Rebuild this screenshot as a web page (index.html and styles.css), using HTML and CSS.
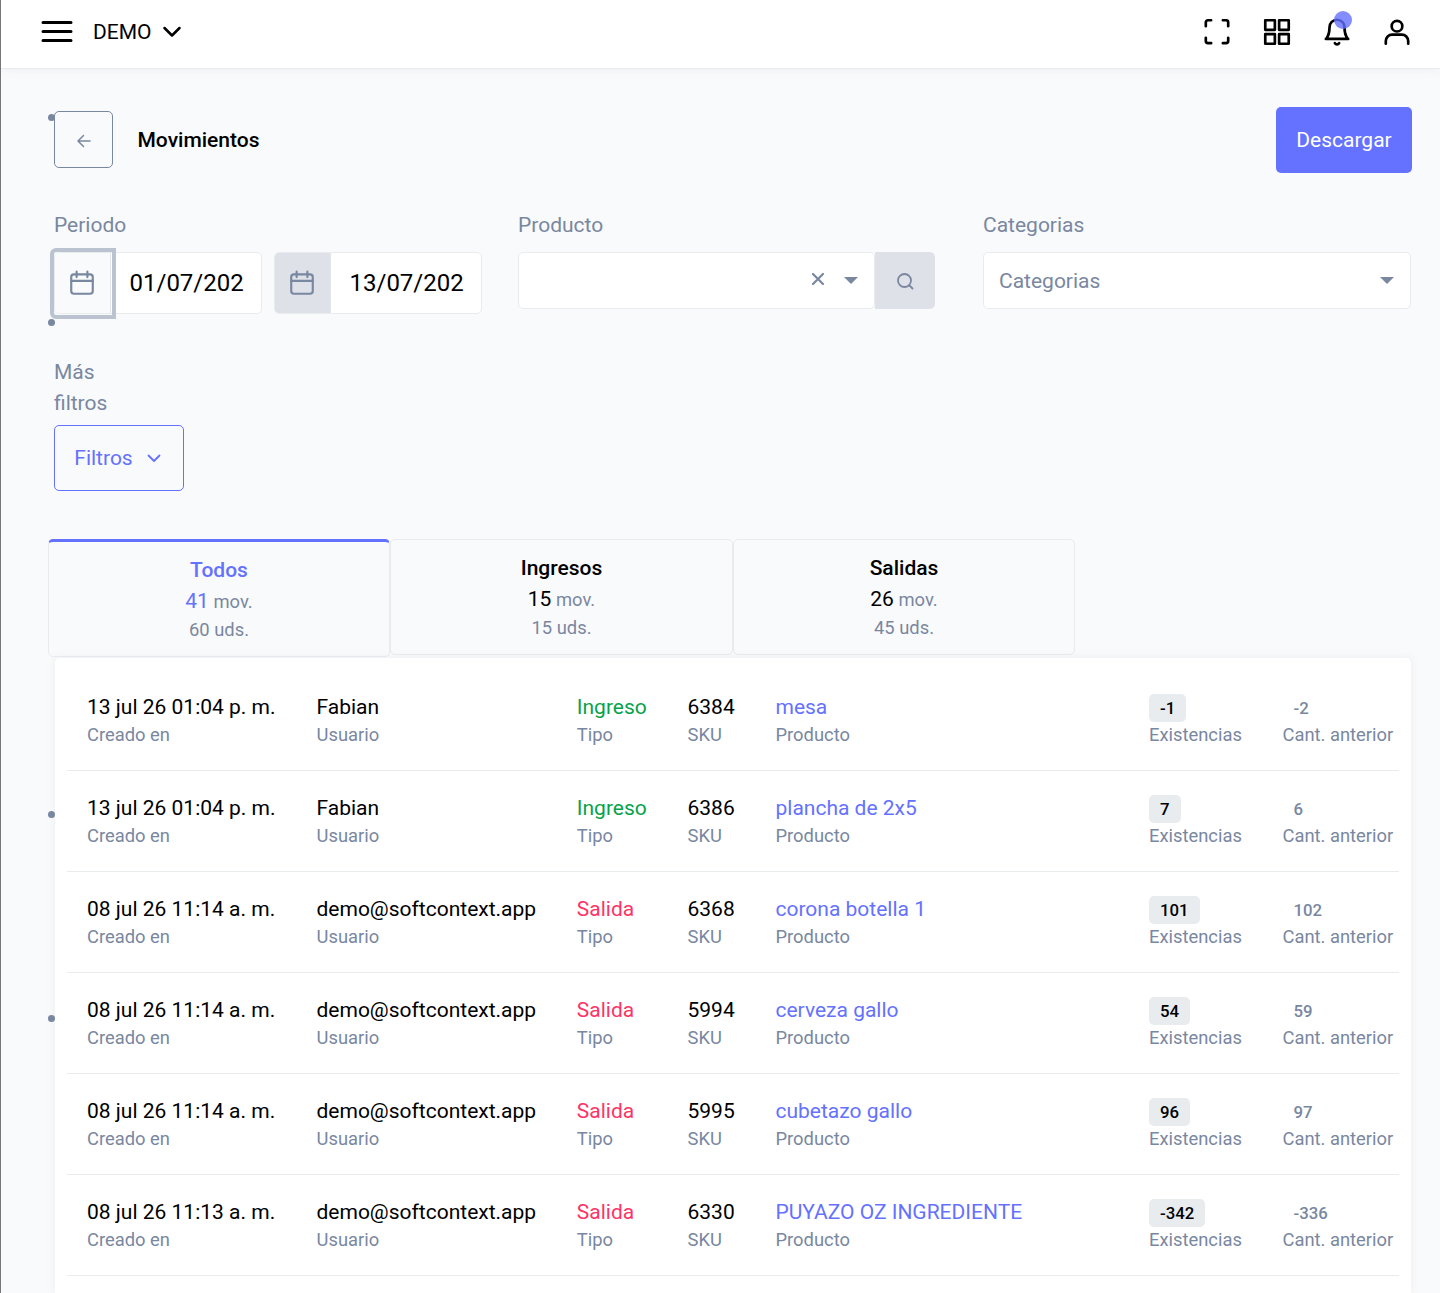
FILE: index.html
```html
<!DOCTYPE html>
<html lang="es">
<head>
  <meta charset="UTF-8">
  <meta name="viewport" content="width=device-width, initial-scale=1.0">
  <title>Movimientos</title>
  <link rel="stylesheet" href="styles.css">
</head>
<body>
  <header class="topbar">
    <svg class="menuIcon" width="32" height="24" viewBox="0 0 32 24"><path d="M2 2.500h28M2 11.500h28M2 20.500h28" /></svg>
    <span class="companyName">DEMO</span>
    <svg class="companyCaret" width="20" height="20" viewBox="0 0 20 20"><path d="M2.500 6l7.500 7.500 7.500-7.500" /></svg>
    <div class="topbarIcons">
      <svg class="navIcon" width="32" height="32" viewBox="0 0 30 30"><path d="M9.500 4H6.500A2 2 0 0 0 4.500 6V9.500M20.500 4H23.500A2 2 0 0 1 25.500 6V9.500M25.500 20.500V23.500A2 2 0 0 1 23.500 25.500H20.500M9.500 25.500H6.500A2 2 0 0 1 4.500 23.500V20.500" /></svg>
      <svg class="navIcon" width="32" height="32" viewBox="0 0 30 30"><rect x="4" y="4" width="9" height="9" /><rect x="17" y="4" width="9" height="9" /><rect x="17" y="17" width="9" height="9" /><rect x="4" y="17" width="9" height="9" /></svg>
      <div class="bellWrap">
        <svg class="navIcon" width="32" height="32" viewBox="0 0 30 30"><path d="M22 10.500a7 7 0 0 0-14 0c0 8-3.500 11-3.500 11h21s-3.500-3-3.500-11M17 25.500a2.300 2.300 0 0 1-4 0" /></svg>
        <span class="bellDot"></span>
      </div>
      <svg class="navIcon" width="32" height="32" viewBox="0 0 30 30"><circle cx="15" cy="9.500" r="5" /><path d="M4.500 26v-2.500a6 6 0 0 1 6-6h9a6 6 0 0 1 6 6V26" /></svg>
    </div>
  </header>

  <main class="page">
    <span class="strayDot dotOne"></span>
    <span class="strayDot dotTwo"></span>
    <span class="strayDot dotThree"></span>
    <span class="strayDot dotFour"></span>

    <div class="pageHead">
      <a class="backBtn" href="#">
        <svg width="18" height="18" viewBox="0 0 18 18"><path d="M15 9H3M8.500 3.500L3 9l5.500 5.500" /></svg>
      </a>
      <h1 class="pageTitle">Movimientos</h1>
      <a class="downloadBtn" href="#">Descargar</a>
    </div>

    <div class="filters">
      <div class="filterCol">
        <label class="filterLabel">Periodo</label>
        <div class="dateRange">
          <div class="dateInput">
            <span class="dateAddon plain">
              <svg class="calIcon" width="28" height="28" viewBox="0 0 26 26"><rect x="3" y="5" width="20" height="18" rx="2.500" /><path d="M3 11h20M8 2.500v5M18 2.500v5" /></svg>
            </span>
            <span class="dateValue">01/07/202</span>
            <span class="focusRing"></span>
          </div>
          <div class="dateInput">
            <span class="dateAddon">
              <svg class="calIcon" width="28" height="28" viewBox="0 0 26 26"><rect x="3" y="5" width="20" height="18" rx="2.500" /><path d="M3 11h20M8 2.500v5M18 2.500v5" /></svg>
            </span>
            <span class="dateValue">13/07/202</span>
          </div>
        </div>
      </div>
      <div class="filterCol">
        <label class="filterLabel">Producto</label>
        <div class="productSelect">
          <div class="selectBox">
            <svg class="clearIcon" width="14" height="14" viewBox="0 0 14 14"><path d="M2 2l10 10M12 2L2 12" /></svg>
            <span class="selectCaret"></span>
          </div>
          <a class="searchBtn" href="#">
            <svg width="20" height="20" viewBox="0 0 20 20"><circle cx="9.500" cy="9.500" r="6.500" /><path d="M14.500 14.500l3 3" /></svg>
          </a>
        </div>
      </div>
      <div class="filterCol">
        <label class="filterLabel">Categorias</label>
        <div class="selectBox categorySelect">
          <span class="selectText">Categorias</span>
          <span class="selectCaret"></span>
        </div>
      </div>
    </div>

    <div class="moreFilters">
      <label class="filterLabel narrow">Más filtros</label>
      <a class="filtersBtn" href="#">
        Filtros
        <svg width="16" height="16" viewBox="0 0 16 16"><path d="M2.500 5.500l5.500 5.500 5.500-5.500" /></svg>
      </a>
    </div>

    <div class="tabs">
      <a class="tab active" href="#">
        <span class="tabTitle">Todos</span>
        <span class="tabCount"><b>41</b> mov.</span>
        <span class="tabUnits">60 uds.</span>
      </a>
      <a class="tab" href="#">
        <span class="tabTitle">Ingresos</span>
        <span class="tabCount"><b>15</b> mov.</span>
        <span class="tabUnits">15 uds.</span>
      </a>
      <a class="tab" href="#">
        <span class="tabTitle">Salidas</span>
        <span class="tabCount"><b>26</b> mov.</span>
        <span class="tabUnits">45 uds.</span>
      </a>
    </div>

    <section class="moveCard">
      <div class="moveRow">
        <div><p class="cellMain">13 jul 26 01:04 p. m.</p><p class="cellSub">Creado en</p></div>
        <div><p class="cellMain">Fabian</p><p class="cellSub">Usuario</p></div>
        <div><p class="cellMain typeIn">Ingreso</p><p class="cellSub">Tipo</p></div>
        <div><p class="cellMain">6384</p><p class="cellSub">SKU</p></div>
        <div><p class="cellMain"><a class="productLink" href="#">mesa</a></p><p class="cellSub">Producto</p></div>
        <div><p class="qtyLine"><span class="stockBadge">-1</span></p><p class="cellSub">Existencias</p></div>
        <div><p class="qtyLine"><span class="prevQty">-2</span></p><p class="cellSub">Cant. anterior</p></div>
      </div>
      <div class="moveRow">
        <div><p class="cellMain">13 jul 26 01:04 p. m.</p><p class="cellSub">Creado en</p></div>
        <div><p class="cellMain">Fabian</p><p class="cellSub">Usuario</p></div>
        <div><p class="cellMain typeIn">Ingreso</p><p class="cellSub">Tipo</p></div>
        <div><p class="cellMain">6386</p><p class="cellSub">SKU</p></div>
        <div><p class="cellMain"><a class="productLink" href="#">plancha de 2x5</a></p><p class="cellSub">Producto</p></div>
        <div><p class="qtyLine"><span class="stockBadge">7</span></p><p class="cellSub">Existencias</p></div>
        <div><p class="qtyLine"><span class="prevQty">6</span></p><p class="cellSub">Cant. anterior</p></div>
      </div>
      <div class="moveRow">
        <div><p class="cellMain">08 jul 26 11:14 a. m.</p><p class="cellSub">Creado en</p></div>
        <div><p class="cellMain">demo@softcontext.app</p><p class="cellSub">Usuario</p></div>
        <div><p class="cellMain typeOut">Salida</p><p class="cellSub">Tipo</p></div>
        <div><p class="cellMain">6368</p><p class="cellSub">SKU</p></div>
        <div><p class="cellMain"><a class="productLink" href="#">corona botella 1</a></p><p class="cellSub">Producto</p></div>
        <div><p class="qtyLine"><span class="stockBadge">101</span></p><p class="cellSub">Existencias</p></div>
        <div><p class="qtyLine"><span class="prevQty">102</span></p><p class="cellSub">Cant. anterior</p></div>
      </div>
      <div class="moveRow">
        <div><p class="cellMain">08 jul 26 11:14 a. m.</p><p class="cellSub">Creado en</p></div>
        <div><p class="cellMain">demo@softcontext.app</p><p class="cellSub">Usuario</p></div>
        <div><p class="cellMain typeOut">Salida</p><p class="cellSub">Tipo</p></div>
        <div><p class="cellMain">5994</p><p class="cellSub">SKU</p></div>
        <div><p class="cellMain"><a class="productLink" href="#">cerveza gallo</a></p><p class="cellSub">Producto</p></div>
        <div><p class="qtyLine"><span class="stockBadge">54</span></p><p class="cellSub">Existencias</p></div>
        <div><p class="qtyLine"><span class="prevQty">59</span></p><p class="cellSub">Cant. anterior</p></div>
      </div>
      <div class="moveRow">
        <div><p class="cellMain">08 jul 26 11:14 a. m.</p><p class="cellSub">Creado en</p></div>
        <div><p class="cellMain">demo@softcontext.app</p><p class="cellSub">Usuario</p></div>
        <div><p class="cellMain typeOut">Salida</p><p class="cellSub">Tipo</p></div>
        <div><p class="cellMain">5995</p><p class="cellSub">SKU</p></div>
        <div><p class="cellMain"><a class="productLink" href="#">cubetazo gallo</a></p><p class="cellSub">Producto</p></div>
        <div><p class="qtyLine"><span class="stockBadge">96</span></p><p class="cellSub">Existencias</p></div>
        <div><p class="qtyLine"><span class="prevQty">97</span></p><p class="cellSub">Cant. anterior</p></div>
      </div>
      <div class="moveRow">
        <div><p class="cellMain">08 jul 26 11:13 a. m.</p><p class="cellSub">Creado en</p></div>
        <div><p class="cellMain">demo@softcontext.app</p><p class="cellSub">Usuario</p></div>
        <div><p class="cellMain typeOut">Salida</p><p class="cellSub">Tipo</p></div>
        <div><p class="cellMain">6330</p><p class="cellSub">SKU</p></div>
        <div><p class="cellMain"><a class="productLink" href="#">PUYAZO OZ INGREDIENTE</a></p><p class="cellSub">Producto</p></div>
        <div><p class="qtyLine"><span class="stockBadge">-342</span></p><p class="cellSub">Existencias</p></div>
        <div><p class="qtyLine"><span class="prevQty">-336</span></p><p class="cellSub">Cant. anterior</p></div>
      </div>
    </section>
  </main>
</body>
</html>
```

FILE: styles.css
```css
* {
  box-sizing: border-box;
  margin: 0;
  padding: 0;
}
html, body {
  height: 100%;
  overflow: hidden;
}
body {
  background-color: #f9fafb;
  border-left: 1px solid #777;
  font-family: Roboto, "Liberation Sans", sans-serif;
  color: #000;
  display: flex;
  flex-direction: column;
}
a {
  text-decoration: none;
}
svg {
  display: block;
  fill: none;
  stroke-linecap: round;
  stroke-linejoin: round;
}

/* Top bar */
.topbar {
  position: relative;
  z-index: 1;
  height: 69px;
  flex-shrink: 0;
  background: #fff;
  border-bottom: 1px solid #e9ecef;
  box-shadow: 0 0 10px rgba(183, 192, 206, 0.2);
  display: flex;
  align-items: center;
  padding: 0 27.500px 4px 39.500px;
}
.menuIcon {
  stroke: #000;
  stroke-width: 3;
  margin-right: 20.500px;
}
.companyName {
  font-size: 21px;
  margin-right: 10px;
}
.companyCaret {
  stroke: #000;
  stroke-width: 2.500;
}
.topbarIcons {
  margin-left: auto;
  display: flex;
  gap: 28px;
}
.navIcon {
  stroke: #000;
  stroke-width: 2.500;
}
.bellWrap {
  position: relative;
}
.bellDot {
  position: absolute;
  top: -5.500px;
  left: 13.500px;
  width: 18px;
  height: 18px;
  border-radius: 50%;
  background: rgba(101, 113, 255, 0.8);
}

/* Page */
.page {
  position: relative;
  flex: 1;
  min-height: 0;
  display: flex;
  flex-direction: column;
  padding: 38px 28px 0 53px;
}
.strayDot {
  position: absolute;
  left: 47px;
  width: 7px;
  height: 7px;
  border-radius: 50%;
  background: #7987a1;
}
.dotOne { top: 45px; }
.dotTwo { top: 250px; }
.dotThree { top: 741.500px; }
.dotFour { top: 945.500px; }

.pageHead {
  display: flex;
  align-items: center;
  height: 66px;
}
.backBtn {
  width: 59px;
  height: 57px;
  border: 1px solid #7987a1;
  border-radius: 5px;
  display: flex;
  align-items: center;
  justify-content: center;
  padding-top: 3px;
  margin-right: 24.500px;
  margin-bottom: 1px;
}
.backBtn svg {
  stroke: #7987a1;
  stroke-width: 1.500;
}
.pageTitle {
  font-size: 21px;
  font-weight: 500;
}
.downloadBtn {
  margin-left: auto;
  width: 136px;
  height: 66px;
  border-radius: 5px;
  background: #6571ff;
  color: #fff;
  font-size: 21px;
  display: flex;
  align-items: center;
  justify-content: center;
}

/* Filters */
.filters {
  display: grid;
  grid-template-columns: 428px 417px 440px;
  column-gap: 36px;
  margin-top: 37px;
}
.filters .filterLabel {
  margin-bottom: 11px;
}
.filters .filterCol:last-child {
  margin-left: 12px;
}
.filterLabel {
  display: block;
  font-size: 21px;
  line-height: 31px;
  color: #7987a1;
  margin-bottom: 12px;
}
.dateRange {
  display: flex;
  gap: 12px;
}
.dateInput {
  position: relative;
  width: 208px;
  height: 62px;
  background: #fff;
  border: 1px solid #e9ecef;
  border-radius: 5px;
  display: flex;
  align-items: center;
  overflow: visible;
}
.dateAddon {
  width: 56px;
  height: 100%;
  flex-shrink: 0;
  background: #dee2e8;
  border-right: 1px solid #e2e5ea;
  border-radius: 4px 0 0 4px;
  display: flex;
  align-items: center;
  justify-content: center;
  padding-right: 1px;
}
.dateAddon.plain {
  background: #f9fafb;
}
.calIcon {
  stroke: #7987a1;
  stroke-width: 2;
}
.dateValue {
  font-size: 24px;
  padding-left: 18.500px;
}
.focusRing {
  position: absolute;
  left: -5px;
  top: -5px;
  width: 66px;
  height: 71px;
  border: 4px solid #bcc3d0;
  border-radius: 6px 0 0 6px;
}
.productSelect {
  display: flex;
}
.selectBox {
  flex: 1;
  height: 57px;
  background: #fff;
  border: 1px solid #e9ecef;
  border-radius: 5px;
  display: flex;
  align-items: center;
  justify-content: flex-end;
  padding-right: 16px;
}
.clearIcon {
  stroke: #7987a1;
  stroke-width: 2.200;
  margin: 0 19px 4px 0;
}
.selectCaret {
  width: 0;
  height: 0;
  border-left: 7px solid transparent;
  border-right: 7px solid transparent;
  border-top: 7px solid #7987a1;
}
.searchBtn {
  width: 60px;
  height: 57px;
  background: #dee2e8;
  border-radius: 0 5px 5px 0;
  display: flex;
  align-items: center;
  justify-content: center;
}
.searchBtn svg {
  stroke: #7987a1;
  stroke-width: 1.800;
}
.categorySelect {
  height: 57px;
  justify-content: space-between;
  padding-left: 15px;
}
.selectText {
  font-size: 21px;
  color: #7987a1;
}
.moreFilters {
  margin-top: 43px;
}
.filterLabel.narrow {
  width: 70px;
  margin-bottom: 6px;
}
.filtersBtn {
  width: 130px;
  height: 66px;
  border: 1px solid #6571ff;
  border-radius: 5px;
  color: #6571ff;
  font-size: 21px;
  display: flex;
  align-items: center;
  justify-content: center;
  gap: 13px;
  padding-right: 2px;
}
.filtersBtn svg {
  stroke: #6571ff;
  stroke-width: 1.800;
}

/* Tabs */
.tabs {
  display: flex;
  align-items: flex-start;
  margin: 48px 0 0 -6px;
}
.tab {
  width: 343px;
  height: 116px;
  border: 1px solid #e9ecef;
  border-radius: 5px;
  display: flex;
  flex-direction: column;
  align-items: center;
  padding-top: 14px;
  color: #000;
}
.tab:last-child {
  width: 342px;
}
.tab.active {
  width: 342px;
  height: 118px;
  border-top: 3px solid #6571ff;
  color: #6571ff;
}
.tabTitle {
  font-size: 21px;
  font-weight: 500;
  line-height: 28px;
}
.tabCount {
  margin-top: 3px;
  font-size: 18.375px;
  line-height: 29px;
  color: #7987a1;
}
.tabCount b {
  font-weight: 400;
  font-size: 21px;
  color: #000;
}
.tab.active .tabCount b {
  color: #6571ff;
}
.tabUnits {
  font-size: 18.375px;
  line-height: 27px;
  color: #7987a1;
}

/* Movements */
.moveCard {
  flex: 1;
  margin: 1px 1px 0 1px;
  background: #fff;
  border-radius: 5px 5px 0 0;
  box-shadow: 0 0 10px rgba(183, 192, 206, 0.2);
  padding: 12px 12px 0;
}
.moveRow {
  height: 101px;
  border-bottom: 1px solid #e9ecef;
  display: grid;
  grid-template-columns: 249.500px 260.300px 110.700px 88px 373.500px 133.500px 1fr;
  padding: 23px 0 0 0;
}
.moveRow > div:first-child {
  padding-left: 20px;
}
.cellMain {
  font-size: 21px;
  line-height: 28px;
  margin-bottom: 1px;
}
.cellSub {
  font-size: 18.375px;
  line-height: 26px;
  color: #7987a1;
}
.qtyLine {
  height: 28px;
  margin: 1px 0 0;
  display: flex;
  align-items: center;
}
.stockBadge {
  height: 28px;
  padding: 0 11px;
  background: #e9ecef;
  border-radius: 5px;
  font-size: 16.800px;
  font-weight: 500;
  line-height: 28px;
}
.prevQty {
  padding-left: 11px;
  font-size: 16.800px;
  font-weight: 500;
  color: #7987a1;
}
.productLink {
  color: #6571ff;
}
.typeIn {
  color: #05a34a;
}
.typeOut {
  color: #ff3366;
}
```
